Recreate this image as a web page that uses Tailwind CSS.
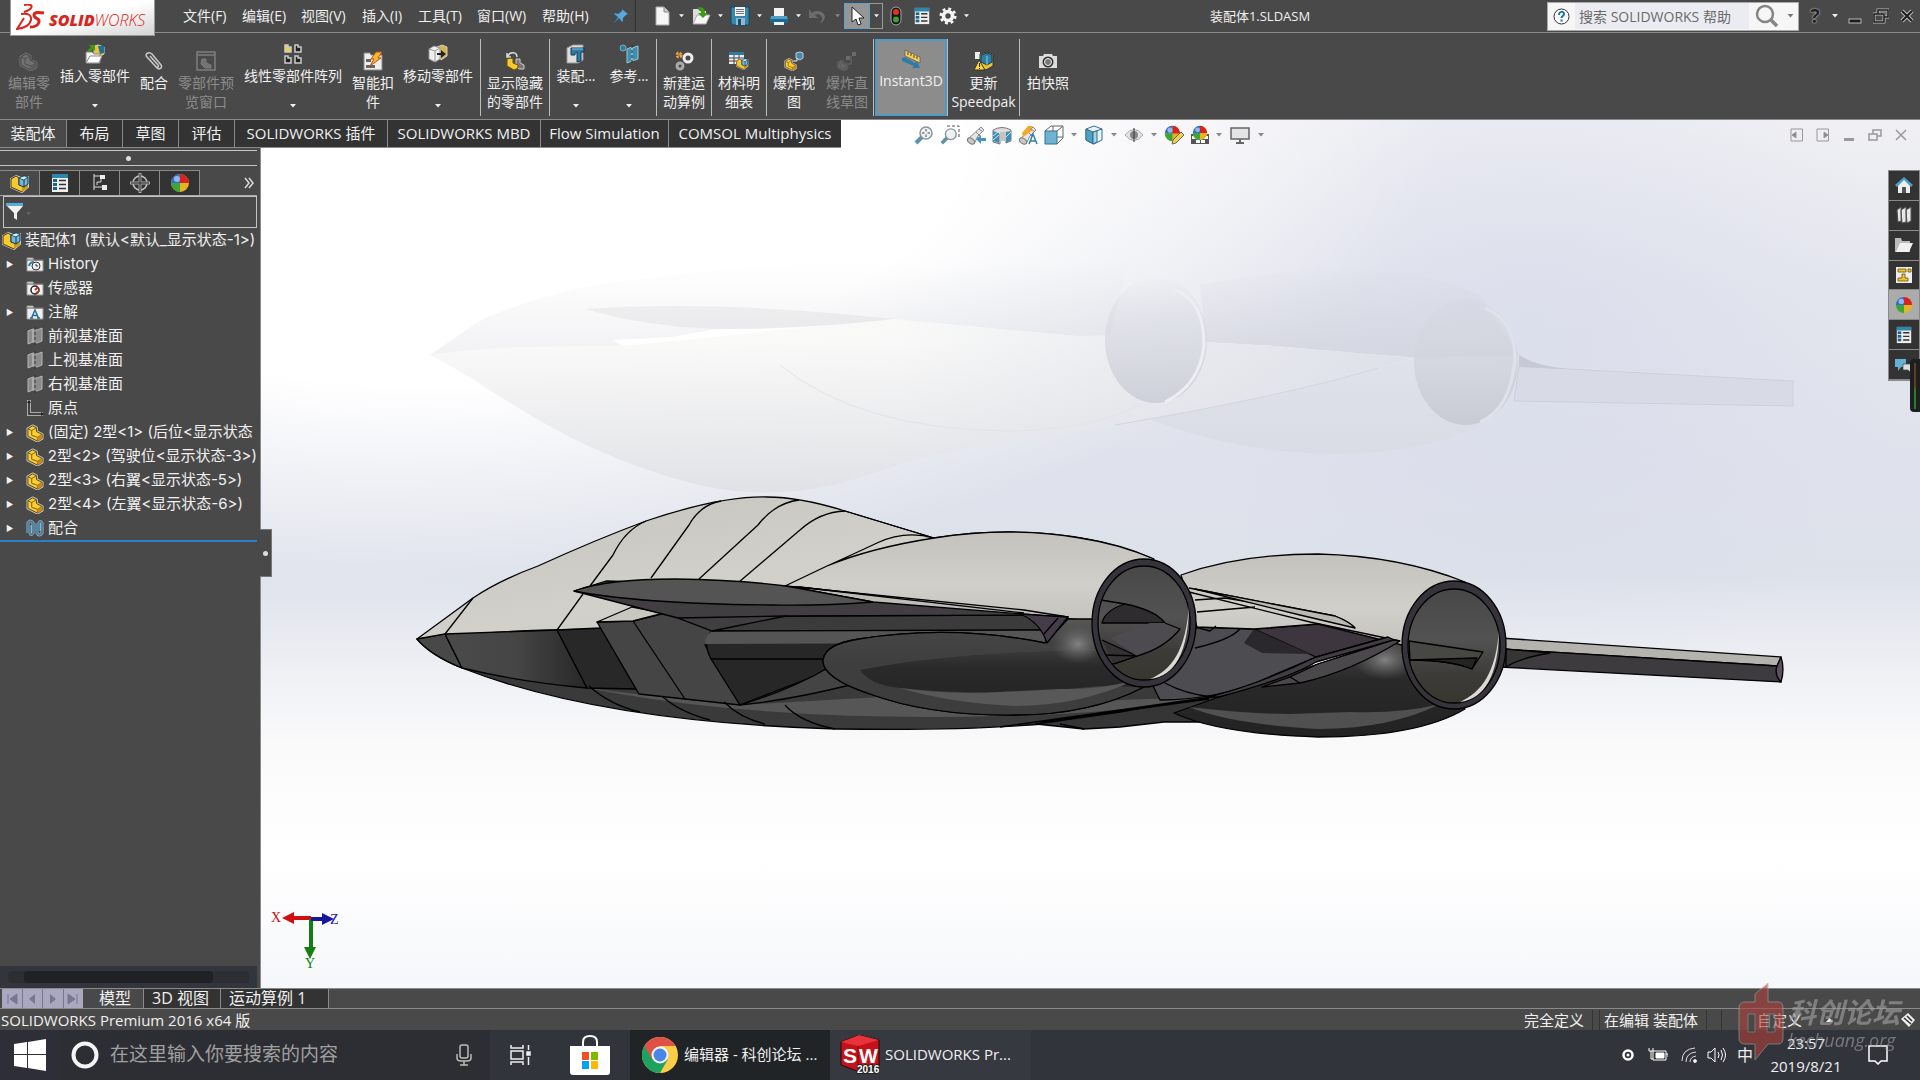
<!DOCTYPE html>
<html lang="zh-CN">
<head>
    <meta charset="UTF-8">
    <meta name="viewport" content="width=device-width, initial-scale=1.0">
    <title>装配体1.SLDASM</title>
    <script src="https://cdn.jsdelivr.net/npm/@tailwindcss/browser@4"></script>
</head>
<body class="flex h-screen flex-col overflow-hidden bg-[#494949] font-['Open_Sans','Noto_Sans_CJK_SC',sans-serif] text-sm text-[#f0f0f0]">

    <!-- shared icons -->
    <svg class="hidden">
        <symbol id="caret" viewBox="0 0 6 4"><path d="M0 0h6L3 3.5z" fill="currentColor"/></symbol>
        <symbol id="part" viewBox="0 0 20 20">
            <path d="M2 6l5-3 4 2v4l6 3v4l-5 3-10-5z" fill="#bbb" stroke="#c4c4c4" stroke-width="3" stroke-linejoin="round"/>
            <path d="M2 6l5-3 4 2v4l6 3v4l-5 3-10-5z" fill="#f9cf32" stroke="#5a430c"/>
            <path d="M2 6l4 2 5-3M6 8v5l6 2 5-3M12 15v4" fill="none" stroke="#7a5a10"/>
            <path d="M12 15l5-3v4l-5 3z" fill="#c88d12"/>
        </symbol>
        <symbol id="asm" viewBox="0 0 20 20">
            <path d="M1 6l5-3 5 2 7-1v10l-6 5-11-5z" fill="#bbb" stroke="#ccc" stroke-width="2" stroke-linejoin="round"/>
            <path d="M1 6l5-3 3 2v7l9 1-6 6-11-5z" fill="#f6c92e" stroke="#4e3a08"/>
            <path d="M12 14l6-3v4l-6 4z" fill="#d39a18"/>
            <path d="M9 5l5-2 4 1v7l-4 3-5-2z" fill="#76b7d8" stroke="#0d3a56"/>
            <path d="M9 5l5 2 4-3M14 7v7" fill="none" stroke="#0d3a56"/>
            <path d="M9.5 5l4.500-1.500L17 4l-3 2.500z" fill="#d8eef8"/>
        </symbol>
        <symbol id="folder" viewBox="0 0 18 18">
            <path d="M1 16V3h6l1 2h9v11z" fill="#efefef" stroke="#9a9a9a"/>
            <path d="M1 5h16" stroke="#555"/>
        </symbol>
        <symbol id="plane" viewBox="0 0 18 20">
            <path d="M2 5l5-2v13l-5 2zM7 3l4 1 5-2v13l-5 2-4-1z" fill="#8b8b8b" stroke="#b5b5b5"/>
            <path d="M9 1v18" stroke="#333" stroke-dasharray="3 2"/>
        </symbol>
        <symbol id="list" viewBox="0 0 20 20">
            <rect x="2" y="1" width="16" height="18" fill="#eee"/>
            <rect x="2" y="1" width="16" height="4" fill="#2e86ab"/>
            <g fill="#1c6387"><rect x="3" y="6" width="4" height="3"/><rect x="3" y="10" width="4" height="3"/><rect x="3" y="14" width="4" height="3"/></g>
            <path d="M9 7.500h7M9 11.500h7M9 15.500h7" stroke="#333" stroke-width="1.500"/>
        </symbol>
        <symbol id="ball" viewBox="0 0 20 20">
            <circle cx="10" cy="10" r="9" fill="#e6b422"/>
            <path d="M10 10V1a9 9 0 0 1 9 9z" fill="#d8231f"/>
            <path d="M10 10H1a9 9 0 0 1 9-9z" fill="#2c6fd6"/>
            <path d="M10 10v9a9 9 0 0 1-9-9z" fill="#3da63a"/>
            <circle cx="7" cy="6" r="3" fill="#fff" opacity=".5"/>
        </symbol>
        <symbol id="lens" viewBox="0 0 20 20">
            <path d="M8 12l-6 6" stroke="#5b93ae" stroke-width="4"/>
            <circle cx="12" cy="8" r="6" fill="#eef3f6" stroke="#8c9296" stroke-width="1.500"/>
        </symbol>
        <symbol id="scope" viewBox="0 0 20 20">
            <path d="M2 14L15 2l3 3-6 6-4 8z" fill="#e6e6e6" stroke="#888"/>
            <ellipse cx="5" cy="16" rx="4" ry="2.500" transform="rotate(35 5 16)" fill="#c9c9c9" stroke="#777"/>
            <path d="M10 7l4 4M13 4l4 3" stroke="#888"/>
        </symbol>
    </svg>

    <!-- title bar -->
    <header class="relative flex h-[33px] shrink-0 items-center border-b border-[#8a8a8a]">
        <div class="absolute top-0 left-[10px] z-10 flex h-9 w-[145px] items-center border border-t-0 border-[#999] bg-linear-to-br from-white from-50% to-[#d4d4d4] pl-[5px] text-[#d9261c]">
            <svg class="h-7 w-[29px]" viewBox="0 0 29 28" fill="none" stroke="#d9261c" stroke-width="2">
                <path d="M8 1c6-1 9 0 7 3-1 2-4 3-7 4"/>
                <path d="M5 10c7-1 11 1 10 6-1 5-7 8-14 9l7-11"/>
                <path d="M28 9c-5-1-10-1-10 2 0 4 6 3 5 7-1 4-5 5-9 5" stroke-width="3"/>
            </svg>
            <span class="pt-1 pl-1 text-[16px] leading-none italic"><b class="font-extrabold">SOLID</b><span class="font-light">WORKS</span></span>
        </div>
        <nav class="flex shrink-0 pl-[183px] text-[14px] whitespace-nowrap">
            <a href="#" class="w-[59px]">文件(F)</a>
            <a href="#" class="w-[59px]">编辑(E)</a>
            <a href="#" class="w-[61px]">视图(V)</a>
            <a href="#" class="w-[56px]">插入(I)</a>
            <a href="#" class="w-[59px]">工具(T)</a>
            <a href="#" class="w-[65px]">窗口(W)</a>
            <a href="#" class="w-[65px]">帮助(H)</a>
        </nav>
        <button class="flex h-8 w-[29px] items-center justify-center border-r border-[#333]" aria-label="固定菜单">
            <svg class="size-4" viewBox="0 0 16 16"><path d="M9 1l6 5-2 1-3 3v3l-1 1-3-4-5 5 4-6-4-3 1-1 3 1 4-3z" fill="#5da9d6" stroke="#2b6d96" stroke-width=".5"/></svg>
        </button>
        <div class="ml-[13px] flex h-8 shrink-0 items-center">
            <button class="flex w-[26px] justify-center" aria-label="新建"><svg class="size-5" viewBox="0 0 20 20"><path d="M4 1h8l5 5v13H4z" fill="#f6f6f6" stroke="#aaa"/><path d="M12 1v5h5" fill="#ccc" stroke="#888"/></svg></button>
            <svg class="mx-1 h-1 w-[5px]"><use href="#caret"/></svg>
            <button class="flex w-[26px] justify-center" aria-label="打开"><svg class="size-5" viewBox="0 0 20 20"><path d="M2 18V3h5l2 2h6v13z" fill="#ddd"/><path d="M2 18L6 9h13l-4 9z" fill="#f6f6f6" stroke="#aaa"/><path d="M6 2c5-2 8 0 8 5h3l-5 5-5-5h3c0-2-1-4-4-5z" fill="#3f9b12"/></svg></button>
            <svg class="mx-1 h-1 w-[5px]"><use href="#caret"/></svg>
            <button class="flex w-[26px] justify-center" aria-label="保存"><svg class="size-5" viewBox="0 0 20 20"><path d="M1 1h18v18H3l-2-2z" fill="#3a87ad" stroke="#134a68"/><path d="M5 1h10v9H5z" fill="#f3f3f3"/><path d="M6 3.500h8M6 5.500h8M6 7.500h8" stroke="#777"/><path d="M6 12h9v7H6z" fill="#8cb9d0"/><path d="M8 13h3v6H8z" fill="#174f6e"/></svg></button>
            <svg class="mx-1 h-1 w-[5px]"><use href="#caret"/></svg>
            <button class="flex w-[26px] justify-center" aria-label="打印"><svg class="size-5" viewBox="0 0 20 20"><path d="M5 2h10v9H5z" fill="#f3f3f3"/><path d="M2 10h16l1 4H1z" fill="#4f9ec4"/><path d="M1 13h18v4H1z" fill="#1d6890"/><path d="M5 16h10v3H5z" fill="#e6f2f8"/></svg></button>
            <svg class="mx-1 h-1 w-[5px]"><use href="#caret"/></svg>
            <button class="flex w-[26px] justify-center" aria-label="撤消" disabled><svg class="size-5" viewBox="0 0 20 20"><path d="M1 3v9h9L7 9c4-2 8 1 7 5-1 2-2 3-3 4 8-3 8-12-1-13-2 0-4 0-6 2z" fill="#6c6c6c"/></svg></button>
            <svg class="mx-1 h-1 w-[5px] text-[#888]"><use href="#caret"/></svg>
            <button class="flex h-[26px] w-[26px] items-center justify-center border border-[#5ba3cf] bg-[#969696]" aria-label="选择"><svg class="size-5" viewBox="0 0 20 20"><path d="M5 1v15l4-3 2 6 3-1-2-6h5z" fill="#fff" stroke="#222"/></svg></button>
            <span class="flex h-[26px] w-[13px] items-center justify-center border border-l-0 border-[#999]"><svg class="h-1 w-[5px]"><use href="#caret"/></svg></span>
            <button class="flex w-[26px] justify-center" aria-label="重建模型"><svg class="size-5" viewBox="0 0 20 20"><rect x="5" y="1" width="10" height="18" rx="5" fill="#161616" stroke="#aaa"/><circle cx="10" cy="6" r="3" fill="#e0331f"/><circle cx="10" cy="13.500" r="3" fill="#3f9e35"/></svg></button>
            <button class="flex w-[26px] justify-center" aria-label="文件属性"><svg class="size-[18px]"><use href="#list"/></svg></button>
            <button class="flex w-[25px] justify-center" aria-label="选项"><svg class="size-[18px]" viewBox="0 0 20 20"><circle cx="10" cy="10" r="5" fill="none" stroke="#f4f4f4" stroke-width="4"/><circle cx="10" cy="10" r="8" fill="none" stroke="#f4f4f4" stroke-width="3" stroke-dasharray="3.200 3.080"/></svg></button>
            <svg class="mx-1 h-1 w-[5px]"><use href="#caret"/></svg>
        </div>
        <h1 class="min-w-0 flex-1 text-center text-[13px]">装配体1.SLDASM</h1>
        <form class="flex h-[29px] w-[252px] shrink-0 items-center border border-[#aaa] bg-[#f6f6f6]">
            <svg class="mx-[5px] size-[17px]" viewBox="0 0 17 17"><circle cx="8.500" cy="8.500" r="7.500" fill="#fff" stroke="#333"/><path d="M6 7c0-4 5-4 5-1 0 2-2.500 2-2.500 4M8.500 11.500v2" fill="none" stroke="#1b75a5" stroke-width="2"/></svg>
            <input type="text" aria-label="搜索帮助" placeholder="搜索 SOLIDWORKS 帮助" class="h-[26px] w-[174px] bg-[#ebecf1] pl-1 text-[14px] placeholder:text-[#6a6a6a]">
            <button type="button" aria-label="搜索" class="ml-[6px]"><svg class="size-6" viewBox="0 0 24 24" fill="none" stroke="#858585"><circle cx="10" cy="10" r="8" stroke-width="2.500"/><path d="M16 16l6 6" stroke-width="3.500"/></svg></button>
            <svg class="ml-2 h-1 w-[7px] text-[#777]"><use href="#caret"/></svg>
        </form>
        <div class="ml-[3px] flex shrink-0 items-center">
            <button class="w-[26px] text-[20px] leading-none font-bold text-[#222] [text-shadow:0_0_1px_#ccc,0_0_2px_#ccc]" aria-label="帮助">?</button>
            <svg class="mx-1 h-1 w-[6px]"><use href="#caret"/></svg>
            <button class="flex w-[26px] justify-center" aria-label="最小化"><svg class="size-4" viewBox="0 0 16 16"><rect x="2" y="11" width="12" height="4" fill="#1c1c1c" stroke="#bbb"/></svg></button>
            <button class="flex w-[26px] justify-center" aria-label="还原"><svg class="size-4" viewBox="0 0 16 16" fill="none"><path d="M5 6V2h10v7h-4M1 6h10v8H1z" stroke="#bbb" stroke-width="3"/><path d="M5 6V2h10v7h-4M1 6h10v8H1z" stroke="#1c1c1c" stroke-width="1.500"/></svg></button>
            <button class="flex w-[26px] justify-center" aria-label="关闭"><svg class="size-4" viewBox="0 0 16 16" fill="none"><path d="M3 3l10 10M13 3L3 13" stroke="#bbb" stroke-width="4"/><path d="M3 3l10 10M13 3L3 13" stroke="#1c1c1c" stroke-width="2"/></svg></button>
        </div>
    </header>

    <!-- ribbon -->
    <div class="flex h-[87px] shrink-0 border-b border-[#8a8a8a] pt-[6px] pb-[3px] text-center text-[14px] leading-[19px] whitespace-nowrap">
        <button class="flex w-[58px] flex-col items-center pt-3 text-[#8c8c8c]" disabled>
            <svg class="mb-[2px] size-5 opacity-30 grayscale"><use href="#part"/></svg>编辑零<br>部件
        </button>
        <button class="flex w-[74px] flex-col items-center pt-[5px]">
            <svg class="mb-[2px] size-5" viewBox="0 0 20 20"><path d="M9 2l4-1 6 2v7l-5 3-5-3z" fill="#efc22f" stroke="#ccc"/><path d="M13 2h6v7l-4 1z" fill="#1f6f99"/><path d="M1 19V8h6l2 2h6v9z" fill="#f2f2f2" stroke="#888"/><path d="M1 19l4-7h12l-3 7z" fill="#fff" stroke="#888"/><path d="M2 7l4-4-2-2h6v6L8 5 5 8z" fill="#3f9b12"/></svg>插入零部件
            <svg class="mt-auto mb-2 h-1 w-[6px]"><use href="#caret"/></svg>
        </button>
        <button class="flex w-[44px] flex-col items-center pt-3">
            <svg class="mb-[2px] size-5" viewBox="0 0 20 20" fill="none" stroke="#c9c9c9" stroke-width="1.500"><path d="M5 8l8 9c2 2 6 0 4-3L8 3C5 0 0 3 3 6l9 10c2 1 3-1 2-2L6 5"/></svg>配合
        </button>
        <button class="flex w-[60px] flex-col items-center pt-3 text-[#8c8c8c]" disabled>
            <svg class="mb-[2px] size-5" viewBox="0 0 20 20" fill="none" stroke="#7d7d7d"><path d="M1 1h18v18H1zM1 4h18" stroke-width="1.500"/><path d="M6 8h4v4l5 2v3H9l-4-4z" fill="#737373"/></svg>零部件预<br>览窗口
        </button>
        <button class="flex w-[114px] flex-col items-center pt-[5px]">
            <svg class="mb-[2px] size-5" viewBox="0 0 20 20" stroke="#ccc" stroke-width="1.500"><path d="M2 1h3v2h3v5H2z" fill="#f0cd4e"/><path d="M12 1h3v2h3v5h-6zM2 12h3v2h3v5H2zM12 12h3v2h3v5h-6z" fill="#222"/></svg>线性零部件阵列
            <svg class="mt-auto mb-2 h-1 w-[6px]"><use href="#caret"/></svg>
        </button>
        <button class="flex w-[46px] flex-col items-center pt-3">
            <svg class="mb-[2px] size-5" viewBox="0 0 20 20"><path d="M1 2h6l1 2h11v15H1z" fill="#eee" stroke="#888"/><path d="M3 8h5v3H3zM3 14h9v3H3z" fill="#666"/><path d="M13 1h6l-4 6h3L7 15l4-7H8z" fill="#f5b92f" stroke="#c44d12"/></svg>智能扣<br>件
        </button>
        <button class="flex w-[84px] flex-col items-center pt-[5px]">
            <svg class="mb-[2px] size-5" viewBox="0 0 20 20"><path d="M9 3l5-2 5 2v9l-6 4z" fill="#d9b64a" stroke="#ccc"/><path d="M1 5l5-3 6 2v11l-5 3-6-3z" fill="#eee" stroke="#999"/><path d="M1 5l6 2 5-3M7 7v11" fill="none" stroke="#999"/><path d="M9 9h4V6l5 4-5 4v-3H9z" fill="#222"/></svg>移动零部件
            <svg class="mt-auto mb-2 h-1 w-[6px]"><use href="#caret"/></svg>
        </button>
        <button class="flex w-[70px] flex-col items-center border-x border-[#bbb] pt-3">
            <svg class="mb-[2px] size-5" viewBox="0 0 20 20"><path d="M3 5c2-5 9-4 9 1M2 2v4h4" fill="none" stroke="#ddd" stroke-width="1.500"/><path d="M11 8h4v4l4 2v4h-5l-3-3z" fill="#777" stroke="#ccc"/><path d="M2 8l4-1 2 1v4l5 2v3l-4 2-7-4z" fill="#f6c92e" stroke="#6b500e"/></svg>显示隐藏<br>的零部件
        </button>
        <button class="flex w-[52px] flex-col items-center pt-[5px]">
            <svg class="mb-[2px] size-5" viewBox="0 0 20 20"><path d="M1 4l6-3h10v15l-5 3H1z" fill="#ddd" stroke="#999"/><path d="M5 4h13v4h-3v9l-4 1V8l-2 1v2H5z" fill="#2b7ba5" stroke="#0f3f5a"/><path d="M6 5h11" stroke="#8cc4de"/></svg>装配...
            <svg class="mt-auto mb-2 h-1 w-[6px]"><use href="#caret"/></svg>
        </button>
        <button class="flex w-[54px] flex-col items-center pt-[5px]">
            <svg class="mb-[2px] size-5" viewBox="0 0 20 20"><circle cx="4" cy="4" r="3" fill="#2b7ba5" stroke="#8ab"/><path d="M8 5l5-2v14l-5 2zM13 4l6-2v13l-6 2z" fill="#3d8db5" stroke="#9cc"/><path d="M13 1v18" stroke="#222" stroke-dasharray="3 2"/></svg>参考...
            <svg class="mt-auto mb-2 h-1 w-[6px]"><use href="#caret"/></svg>
        </button>
        <button class="flex w-[55px] flex-col items-center border-l border-[#bbb] pt-3">
            <svg class="mb-[2px] size-5" viewBox="0 0 20 20" fill="none"><circle cx="5" cy="4" r="2" stroke="#f0a040" stroke-width="3" stroke-dasharray="2 1"/><circle cx="14" cy="7" r="4" stroke="#eee" stroke-width="3"/><circle cx="6" cy="15" r="3" stroke="#aaa" stroke-width="3"/></svg>新建运<br>动算例
        </button>
        <button class="flex w-[55px] flex-col items-center border-l border-[#bbb] pt-3">
            <svg class="mb-[2px] size-5" viewBox="0 0 20 20"><path d="M0 1h15v12H0z" fill="#eee"/><path d="M0 1h15v3H0z" fill="#2b7ba5"/><path d="M0 7h15M0 10h15M5 4v9M10 4v9" stroke="#444"/><svg x="7" y="6" width="13" height="13"><use href="#asm"/></svg></svg>材料明<br>细表
        </button>
        <button class="flex w-[55px] flex-col items-center border-l border-[#bbb] pt-3">
            <svg class="mb-[2px] size-5" viewBox="0 0 20 20"><svg x="0" y="6" width="14" height="14"><use href="#part"/></svg><path d="M12 2l4-1 3 1v5l-3 2-4-2z" fill="#3d8db5" stroke="#ccc"/><path d="M9 10h4V7" stroke="#eee" fill="none"/></svg>爆炸视<br>图
        </button>
        <button class="flex w-[52px] flex-col items-center pt-3 text-[#8c8c8c]" disabled>
            <svg class="mb-[2px] size-5 opacity-25 grayscale" viewBox="0 0 20 20"><svg x="0" y="8" width="12" height="12"><use href="#part"/></svg><path d="M9 5h4v4H9zM15 1h4v4h-4z" fill="#ccc"/><path d="M8 13h6V5" stroke="#ccc" fill="none"/></svg>爆炸直<br>线草图
        </button>
        <div class="border-l border-[#bbb] pl-px">
            <button class="flex h-full w-[72px] flex-col items-center border-2 border-[#4b9ac9] bg-[#8c8c8c] pt-2">
                <svg class="mb-[2px] size-5" viewBox="0 0 20 20"><path d="M4 1l15 7v6L4 7z" fill="#f4ce57" stroke="#555" stroke-width=".7"/><path d="M7 3v3M10 4v3M13 6v3M16 7v3" stroke="#444"/><path d="M1 9l3-1 10 6 2-2 3 7h-8l2-2L1 12z" fill="#2c7ca8"/></svg>Instant3D
            </button>
        </div>
        <button class="flex w-[73px] flex-col items-center border-x border-[#bbb] pt-3">
            <svg class="mb-[2px] size-5" viewBox="0 0 20 20"><path d="M1 1h5v7H1z" fill="#eee"/><path d="M6 3l7-2 6 2v12l-7 4-6-3z" fill="#efc22f" stroke="#333"/><path d="M7 4l6-2 5 2v7l-5 3-6-3z" fill="#2f7ea8" stroke="#0d3a56"/><path d="M13 5v9" stroke="#9cd"/><path d="M5 9l6 10H0z" fill="#ffd92e" stroke="#333"/><path d="M5.500 12v4M5.500 17v1" stroke="#222"/></svg>更新<br>Speedpak
        </button>
        <button class="flex w-[56px] flex-col items-center pt-3">
            <svg class="mb-[2px] size-5" viewBox="0 0 20 20"><path d="M1 5h4l1-2h8l1 2h4v12H1z" fill="#dcdcdc"/><circle cx="10" cy="11" r="5.500" fill="#333"/><circle cx="10" cy="11" r="3.500" fill="#777" stroke="#eee"/></svg>拍快照
        </button>
    </div>

    <main class="relative flex min-h-0 flex-1 flex-col">
        <!-- 3D scene -->
        <svg class="absolute inset-0 size-full" viewBox="0 120 1920 868" preserveAspectRatio="xMidYMid slice">
            <defs>
                <linearGradient id="sky" x1="0" y1="0" x2="0" y2="1">
                    <stop offset="0" stop-color="#f0f0f4"/><stop offset=".2" stop-color="#e4e6ee"/>
                    <stop offset=".4" stop-color="#dfe2ec"/><stop offset=".52" stop-color="#dde1ea"/>
                    <stop offset=".62" stop-color="#eceef3"/><stop offset=".72" stop-color="#fafafb"/>
                    <stop offset=".85" stop-color="#fff"/><stop offset="1" stop-color="#f6f7fa"/>
                </linearGradient>
                <radialGradient id="glow" gradientUnits="userSpaceOnUse" cx="0" cy="0" r="1" gradientTransform="translate(500 190) rotate(-5) scale(950 400)">
                    <stop offset="0" stop-color="#fff"/><stop offset=".48" stop-color="#fff"/><stop offset=".72" stop-color="#fff" stop-opacity=".5"/><stop offset="1" stop-color="#fff" stop-opacity="0"/>
                </radialGradient>
                <radialGradient id="haze" gradientUnits="userSpaceOnUse" cx="0" cy="0" r="1" gradientTransform="translate(1530 330) scale(380 360)">
                    <stop offset="0" stop-color="#d6daea" stop-opacity=".6"/><stop offset="1" stop-color="#d6daea" stop-opacity="0"/>
                </radialGradient>
                <radialGradient id="shine"><stop offset="0" stop-color="#8a8a8a" stop-opacity=".9"/><stop offset="1" stop-color="#666" stop-opacity="0"/></radialGradient>
                <linearGradient id="skin" x1="0" y1="0" x2="1" y2="1"><stop offset="0" stop-color="#c3c2bd"/><stop offset=".5" stop-color="#d1d0cb"/><stop offset="1" stop-color="#c6c5c0"/></linearGradient>
                <linearGradient id="pod" x1="0" y1="0" x2="0" y2="1"><stop offset="0" stop-color="#c3c2bd"/><stop offset=".6" stop-color="#d0cfca"/><stop offset="1" stop-color="#c4c3be"/></linearGradient>
                <linearGradient id="belly" x1="0" y1="0" x2="0" y2="1"><stop offset="0" stop-color="#585858"/><stop offset=".5" stop-color="#2a2a2a"/><stop offset="1" stop-color="#222"/></linearGradient>
                <linearGradient id="side" x1="0" y1="0" x2="1" y2="0"><stop offset="0" stop-color="#4a4a4a"/><stop offset=".5" stop-color="#454545"/><stop offset="1" stop-color="#282828"/></linearGradient>
                <linearGradient id="bore" x1="0" y1="0" x2="0" y2="1"><stop offset="0" stop-color="#484848"/><stop offset=".45" stop-color="#525252"/><stop offset=".75" stop-color="#3c3b38"/><stop offset="1" stop-color="#37362f"/></linearGradient>
                <linearGradient id="fade" gradientUnits="userSpaceOnUse" x1="0" y1="260" x2="0" y2="355"><stop offset="0" stop-color="#c8c9d0" stop-opacity="0"/><stop offset="1" stop-color="#c0c2ca" stop-opacity=".55"/></linearGradient>
                <linearGradient id="veil" gradientUnits="userSpaceOnUse" x1="0" y1="340" x2="0" y2="495"><stop offset="0" stop-color="#f9f9f8" stop-opacity=".9"/><stop offset="1" stop-color="#e0e1e5" stop-opacity=".95"/></linearGradient>
                <linearGradient id="veilx" gradientUnits="userSpaceOnUse" x1="900" y1="0" x2="1400" y2="0"><stop offset="0" stop-color="#dcdfe8" stop-opacity="0"/><stop offset="1" stop-color="#dcdfe8" stop-opacity=".9"/></linearGradient>
                <linearGradient id="veil2" gradientUnits="userSpaceOnUse" x1="0" y1="340" x2="0" y2="455"><stop offset="0" stop-color="#e0e3eb"/><stop offset="1" stop-color="#dadce5"/></linearGradient>
                <linearGradient id="disc" gradientUnits="userSpaceOnUse" x1="0" y1="275" x2="0" y2="425"><stop offset="0" stop-color="#d0d2dc" stop-opacity="0"/><stop offset=".4" stop-color="#d4d6df" stop-opacity=".6"/><stop offset="1" stop-color="#c9cbd4"/></linearGradient>
            </defs>
            <rect y="120" width="1920" height="868" fill="url(#sky)"/>
            <rect y="120" width="1920" height="868" fill="url(#haze)"/>
            <rect y="120" width="1920" height="868" fill="url(#glow)"/>

            <!-- floor reflection -->
            <path d="M1152 420Q1240 454 1337 454Q1420 454 1478 427L1500 350H1200z" fill="url(#veil2)"/>
            <path d="M1200 285Q1380 250 1480 295L1519 355L1414 358Q1380 352 1337 361L1275 346L1206 342z" fill="url(#fade)" opacity=".6"/>
            <path d="M1519 366L1568 369L1793 381V406L1514 401z" fill="#d8dbe6" stroke="#cdd0db"/>
            <path d="M1519 355Q1535 366 1568 369L1519 367z" fill="#c6c9d3"/>
            <path d="M430 355C500 390 560 450 699 485Q762 500 835 485C890 470 900 460 962 450L1115 425Q1290 395 1378 368L1414 358L1275 346L1079 336L894 319L622 346Q490 345 430 355z" fill="url(#veil)"/>
            <path d="M780 480L962 450L1115 425Q1290 395 1378 368L1414 358L1275 346L1079 336L894 319z" fill="url(#veilx)"/>
            <path d="M430 355L481 320Q560 285 654 278Q800 255 1130 258L1110 335L1079 336L894 319Q800 329 717 329L672 337L613 340L622 346Q490 345 430 355z" fill="url(#fade)" opacity=".4"/>
            <path d="M586 309Q717 300 894 319Q800 330 717 329Q640 326 586 309z" fill="#dcdddf" opacity=".4"/>
            <path d="M780 365Q860 430 1010 431Q1090 430 1140 405" fill="none" stroke="#e3e4e9"/>
            <path d="M1115 425Q1290 395 1378 368" fill="none" stroke="#d4d6de"/>
            <ellipse cx="1156" cy="340" rx="51" ry="63" fill="url(#disc)"/>
            <path d="M1175 290Q1204 300 1204 345Q1200 385 1165 402" fill="none" stroke="#edeef3" stroke-width="3"/>
            <ellipse cx="1466" cy="362" rx="52" ry="63" fill="url(#disc)"/>
            <path d="M1485 308Q1515 320 1515 360Q1510 410 1480 422" fill="none" stroke="#e0e2eb" stroke-width="3"/>

            <g stroke="#000" stroke-width="1.300" stroke-linejoin="round">
                <!-- tail boom -->
                <path d="M1500 638L1781 657L1777 666L1500 649z" fill="#b4b3ae"/>
                <path d="M1500 649L1777 666L1781 682L1500 667z" fill="#3e3b3f"/>
                <path d="M1506 649L1550 653Q1520 658 1506 667z" fill="#353535"/>
                <path d="M1781 657Q1785 669 1781 682Q1774 675 1777 666z" fill="#5c4e63"/>
                <!-- fuselage, lower half -->
                <path d="M417 639Q432 656 462 668Q600 722 836 729Q960 731 1043 724Q1120 716 1212 697L1388 637L1197 600L700 600L445 634z" fill="#3a3a3a"/>
                <path d="M1036 724L1084 729L1120 727L1164 722L1209 722L1240 690L1120 712z" fill="#353535"/>
                <path d="M587 688L636 694L740 705L880 697L951 712L1120 700L1209 697Q1120 714 1000 716Q760 722 587 688z" fill="#565656" stroke="none"/>
                <!-- aft pod -->
                <path d="M1174 713L1219 697L1300 670L1390 640L1420 620L1465 709Q1418 737 1318 737Q1219 734 1174 713z" fill="url(#belly)"/>
                <path d="M1189 707Q1250 714 1290 714L1350 712Q1400 714 1440 704Q1390 729 1318 729Q1230 724 1189 707z" fill="#505050" stroke="none"/>
                <ellipse cx="1385" cy="660" rx="32" ry="20" fill="url(#shine)" stroke="none"/>
                <path d="M1150 680L1197 627L1254 629L1318 624L1388 637L1316 657L1269 677Q1220 700 1160 700z" fill="#4d4c50"/>
                <path d="M1254 629L1318 624L1386 637L1316 657z" fill="#3d363f"/>
                <path d="M1254 629L1244 643L1262 653L1310 654z" fill="#2a282b" stroke="none"/>
                <path d="M1181 575Q1239 554 1318 554Q1400 556 1465 582L1402 645L1318 624L1254 629L1197 627z" fill="url(#pod)"/>
                <path d="M1195 600L1225 598L1280 607M1197 612L1255 607M1189 588L1335 616Q1350 622 1355 628M1189 592L1310 622L1400 641" fill="none"/>
                <path d="M1195 589L1335 616Q1350 622 1355 628L1300 615z" fill="#bab9b4"/>
                <path d="M1388 637L1316 657Q1260 684 1209 697L1219 697Q1290 678 1316 662L1394 640z" fill="#423d43"/>
                <path d="M1394 640L1318 664L1290 677L1262 687L1300 683Q1350 672 1400 641z" fill="#4a484b"/>
                <path d="M1290 677L1300 683M1195 627l15 4 6-5M1195 648Q1230 640 1240 629M1165 683Q1185 694 1212 697L1000 727M1209 699L1040 722" fill="none"/>
                <!-- upper hull -->
                <path d="M417 639L473 598Q500 580 538 566Q595 540 646 521Q720 496 767 497Q800 497 845 511L934 538Q969 532 1011 532Q1090 532 1154 559L1093 620L1066 618L799 587L601 629L557 630Q490 631 417 639z" fill="url(#skin)"/>
                <path d="M785 586Q810 572 827 566Q880 545 934 538Q1010 526 1080 538Q1120 544 1154 559L1110 570L1093 620L1066 618L799 587z" fill="url(#pod)" stroke="none"/>
                <path d="M473 598L445 634L462 668M646 521Q625 530 613 555L590 586M583 594L557 630L587 688M721 501Q700 505 689 525L651 578M799 500Q775 503 758 525L699 579M845 511Q820 512 800 530L739 582M934 538Q905 530 877 543Q845 558 827 566L785 586M827 566Q870 548 934 538M845 511L934 538Q1010 526 1080 538Q1120 544 1154 559" fill="none"/>
                <!-- nose flank -->
                <path d="M417 639L445 634L462 668Q430 655 417 639z" fill="#484848"/>
                <path d="M445 634L557 630L587 688Q520 682 462 668z" fill="url(#side)"/>
                <path d="M557 630L601 628L636 689L587 688z" fill="#282828"/>
                <!-- air intake -->
                <path d="M597 622L633 621L678 610L720 612L705 645L740 705L685 699L639 694z" fill="#454545"/>
                <path d="M633 621L685 699" fill="none"/>
                <path d="M597 622L632 607L664 613L633 621z" fill="#c8c7c2"/>
                <path d="M678 618L712 631Q730 616 786 616L1034 615L1045 645L830 670L740 705L711 659Q702 642 712 631z" fill="#272727"/>
                <path d="M712 631Q730 616 786 616L1034 615L1043 630z" fill="#3b3b3b"/>
                <path d="M712 631L1043 630L1045 643L705 644Q705 636 712 631z" fill="#555" stroke="none"/>
                <path d="M711 659L825 659M712 631L1043 630" fill="none"/>
                <path d="M740 705Q790 690 826 669L850 685Q790 700 740 705z" fill="#444"/>
                <!-- near pod underside -->
                <path d="M823 660Q825 644 859 639Q951 624 1045 643L1068 619L1098 619Q1084 650 1120 679L1144 687Q1090 715 1015 715Q930 716 870 694Q822 678 823 660z" fill="url(#belly)"/>
                <path d="M823 660Q825 644 859 639Q951 624 1045 643L1098 650Q950 652 860 670Q870 685 900 688Q1000 698 1098 686L1144 687Q1090 715 1015 715Q930 716 870 694Q822 678 823 660z" fill="#444" stroke="none" opacity=".8"/>
                <path d="M900 688Q950 695 1000 692L1060 689Q1100 690 1135 680Q1080 706 1015 706Q950 703 900 688z" fill="#585858" stroke="none"/>
                <ellipse cx="1078" cy="644" rx="26" ry="20" fill="url(#shine)" stroke="none"/>
                <path d="M823 660Q825 644 859 639Q951 624 1045 643M823 660Q822 678 870 694Q930 716 1015 715Q1090 715 1144 687" fill="none"/>
                <!-- wing -->
                <path d="M574 591L606 581L799 587L1068 617L1034 615L786 616L712 631L678 618z" fill="#413e42"/>
                <path d="M786 586L873 602L1060 617L1068 617L1024 610z" fill="#bdbcb7"/>
                <path d="M574 591Q606 579 675 579Q740 580 786 586L873 602Q820 606 772 605Q640 604 574 591z" fill="#545454"/>
                <path d="M1020 614Q1040 622 1047 643L1068 617z" fill="#443c48"/>
                <path d="M1058 618L1043 635M678 618L786 616M799 587L1024 613" fill="none"/>
                <path d="M589 686Q610 705 640 712M663 697Q680 712 710 720M724 702Q740 718 765 724M785 705Q800 722 835 729M1060 724L1084 729" fill="none"/>
            </g>
            <!-- engine rings -->
            <g stroke="#000" stroke-width="1.300" stroke-linejoin="round">
                <ellipse cx="1144" cy="623" rx="52" ry="64" fill="#37333a"/>
                <ellipse cx="1144" cy="623" rx="46" ry="57" fill="url(#bore)"/>
                <path d="M1101 600L1125 604Q1155 610 1165 623H1102Q1105 610 1125 604" fill="#2e2c2f"/>
                <path d="M1102 640L1137 656L1114 664M1106 655L1137 656" fill="#333134"/>
                <path d="M1150 623H1165L1180 629Q1165 648 1137 656L1110 638z" fill="#4d4a50" stroke="none"/>
                <path d="M1165 623L1180 629Q1165 648 1137 656Q1115 664 1112 664" fill="none"/>
                <path d="M1189 605C1186 650 1172 670 1150 679Q1188 675 1189 605z" fill="#dad9d3" stroke="none"/>
                <ellipse cx="1454" cy="645" rx="52" ry="64" fill="#37333a"/>
                <ellipse cx="1454" cy="646" rx="46" ry="57" fill="url(#bore)"/>
                <path d="M1409 641L1483 652L1472 669Q1450 660 1410 660z" fill="#474743"/>
                <path d="M1410 660L1477 658L1472 669Q1450 660 1410 660z" fill="#242420"/>
                <path d="M1499 630C1496 672 1482 692 1460 702Q1498 697 1499 630z" fill="#dad9d3" stroke="none"/>
            </g>

            <!-- axis triad -->
            <g font-family="'Liberation Serif',serif" font-size="14">
                <path d="M288 918h23" stroke="#d01010" stroke-width="4"/><path d="M282 918l12-6v12z" fill="#d01010"/>
                <path d="M311 919v30" stroke="#118011" stroke-width="4"/><path d="M310 959l-6-12h12z" fill="#118011"/>
                <path d="M311 919h14" stroke="#1616a0" stroke-width="4"/><path d="M334 919l-12-6v12z" fill="#1616a0"/>
                <text x="271" y="922" fill="#d01010">X</text><text x="330" y="924" fill="#1616c0">Z</text><text x="305" y="968" fill="#118011">Y</text>
            </g>
        </svg>

        <!-- command tabs and view toolbar -->
        <div class="relative flex h-7 shrink-0">
            <nav class="flex border-b border-[#8a8a8a] bg-[#333] text-center text-[15px] leading-[26px] whitespace-nowrap">
                <a href="#" class="w-[67px] border-r border-[#8a8a8a] bg-[#494949]">装配体</a>
                <a href="#" class="w-14 border-r border-[#8a8a8a]">布局</a>
                <a href="#" class="w-14 border-r border-[#8a8a8a]">草图</a>
                <a href="#" class="w-14 border-r border-[#8a8a8a]">评估</a>
                <a href="#" class="w-[153px] border-r border-[#8a8a8a]">SOLIDWORKS 插件</a>
                <a href="#" class="w-[153px] border-r border-[#8a8a8a]">SOLIDWORKS MBD</a>
                <a href="#" class="w-[128px] border-r border-[#8a8a8a]">Flow Simulation</a>
                <a href="#" class="w-[172px]">COMSOL Multiphysics</a>
            </nav>
            <div class="ml-[70px] flex items-center pt-[2px] text-[#888]">
                <button class="flex w-[26px] justify-center" aria-label="整屏显示"><svg class="size-5" viewBox="0 0 20 20"><use href="#lens"/><path d="M12 4v8M8 8h8" stroke="#444" stroke-dasharray="2.500 3"/></svg></button>
                <button class="flex w-[26px] justify-center" aria-label="局部放大"><svg class="size-5" viewBox="0 0 20 20"><path d="M7 1h12v12" fill="none" stroke="#555" stroke-dasharray="3 2"/><svg y="2" width="18" height="18"><use href="#lens"/></svg></svg></button>
                <button class="flex w-[26px] justify-center" aria-label="上一视图"><svg class="size-5" viewBox="0 0 20 20"><use href="#scope"/><path d="M10 14l5-4v3h5v3h-5v3z" fill="#4a93b8"/></svg></button>
                <button class="flex w-[26px] justify-center" aria-label="剖面视图"><svg class="size-5" viewBox="0 0 20 20"><path d="M1 5q9-5 18 0v11l-5 2V9H8v10l-7-2z" fill="#ddd" stroke="#777"/><path d="M8 7h6v10q-3-2-6 0z" fill="#c4c4c4"/><path d="M1 6l6 2v10l-6-2zM14 7l5-1v9l-5 3z" fill="#3d8db5"/><path d="M1 11l5-4M1 15l6-5M14 12l5-5" stroke="#d0e8f4"/></svg></button>
                <button class="flex w-[26px] justify-center" aria-label="动态注解视图"><svg class="size-5" viewBox="0 0 20 20"><use href="#scope"/><path d="M4 8l6-7h5l-3 4h3L5 12z" fill="#f3a928"/><path d="M11 19l4-10 4 10M12.500 16h5" stroke="#3480a8" stroke-width="1.500" fill="none"/></svg></button>
                <button class="flex w-[26px] justify-center" aria-label="视图定向"><svg class="size-5" viewBox="0 0 20 20"><path d="M1 6l6-5h12v12l-6 6M13 6l6-5M9 1v11h10" fill="none" stroke="#666"/><path d="M1 6h12v13H1z" fill="#6fb3d4" stroke="#33708f"/></svg></button>
                <svg class="mx-1 h-1 w-[6px]"><use href="#caret"/></svg>
                <button class="flex w-[26px] justify-center" aria-label="显示样式"><svg class="size-5" viewBox="0 0 20 20" stroke="#33708f"><path d="M2 4l8-3 8 3v11l-8 4-8-4z" fill="#e9f4f9"/><path d="M2 4l7 3v12l-7-4z" fill="#4f9ec4"/><path d="M9 7l9-3M9 7v12" fill="none"/><path d="M9 7l4-1v11l-4 2z" fill="#a9d3e6"/></svg></button>
                <svg class="mx-1 h-1 w-[6px]"><use href="#caret"/></svg>
                <button class="flex w-[26px] justify-center" aria-label="隐藏/显示项目"><svg class="size-5" viewBox="0 0 20 20"><path d="M1 10q9-11 18 0q-9 11-18 0z" fill="#e4e4e4" stroke="#aaa"/><circle cx="10" cy="10" r="4" fill="#888"/><path d="M10 3v14" stroke="#333"/></svg></button>
                <svg class="mx-1 h-1 w-[6px]"><use href="#caret"/></svg>
                <button class="flex w-[26px] justify-center" aria-label="编辑外观"><svg class="size-5" viewBox="0 0 20 20"><svg width="17" height="17"><use href="#ball"/></svg><path d="M8 19l1-4 8-8 3 3-8 8z" fill="#f2cf51" stroke="#666"/></svg></button>
                <button class="flex w-[25px] justify-center" aria-label="应用布景"><svg class="size-5" viewBox="0 0 20 20"><path d="M1 9h18v10H1z" fill="#555"/><path d="M2 11h4v3H2zM14 11h4v3h-4zM6 15h4v3H6zM11 15h4v3h-4z" fill="#fff"/><svg x="2" width="16" height="16"><use href="#ball"/></svg></svg></button>
                <svg class="mx-1 h-1 w-[6px]"><use href="#caret"/></svg>
                <button class="flex w-[28px] justify-center" aria-label="视图设定"><svg class="size-5" viewBox="0 0 20 20"><path d="M1 3h18v11H1z" fill="#e4e4e6" stroke="#666" stroke-width="1.500"/><path d="M10 14v3M6 18h8" stroke="#666" stroke-width="2"/></svg></button>
                <svg class="mx-1 h-1 w-[6px]"><use href="#caret"/></svg>
            </div>
            <div class="ml-auto flex items-center pt-[2px] pr-[6px]">
                <button class="flex w-[26px] justify-center" aria-label="左侧窗格"><svg class="size-[14px]" viewBox="0 0 14 14" fill="none" stroke="#999"><path d="M1 1h11.500v12H1z"/><path d="M6 4v6L2 7z" fill="#888"/></svg></button>
                <button class="flex w-[26px] justify-center" aria-label="右侧窗格"><svg class="size-[14px]" viewBox="0 0 14 14" fill="none" stroke="#999"><path d="M1 1h11.500v12H1z"/><path d="M8 4v6l4-3z" fill="#888"/></svg></button>
                <button class="flex w-[26px] justify-center" aria-label="最小化文档"><svg class="size-[14px]" viewBox="0 0 14 14"><path d="M2 10h10v3H2z" fill="#999"/></svg></button>
                <button class="flex w-[26px] justify-center" aria-label="还原文档"><svg class="size-[14px]" viewBox="0 0 14 14" fill="none" stroke="#999" stroke-width="1.500"><path d="M1 6h8v6H1zM5 6V2h8v6H9"/></svg></button>
                <button class="flex w-[26px] justify-center" aria-label="关闭文档"><svg class="size-[14px]" viewBox="0 0 14 14" stroke="#999" stroke-width="1.500"><path d="M2 2l10 10M12 2L2 12"/></svg></button>
            </div>
        </div>

        <div class="relative flex min-h-0 flex-1 justify-between">
            <!-- feature manager -->
            <aside class="relative flex w-[261px] shrink-0 flex-col border-r border-[#8a8a8a] bg-[#494949]">
                <div class="mt-[2px] mr-[3px] flex h-4 items-center justify-center border-y border-[#c4c4c4]"><span class="size-[5px] rounded-full bg-[#ddd]"></span></div>
                <div class="mt-1 mr-[3px] flex h-[26px] items-center border-b border-[#aaa]">
                    <button class="flex h-full w-10 items-center justify-center border-t border-r border-[#8a8a8a]" aria-label="设计树"><svg class="size-5"><use href="#asm"/></svg></button>
                    <button class="flex h-full w-10 items-center justify-center border-t border-r border-[#8a8a8a] bg-[#333]" aria-label="属性"><svg class="size-5"><use href="#list"/></svg></button>
                    <button class="flex h-full w-10 items-center justify-center border-t border-r border-[#8a8a8a] bg-[#333]" aria-label="配置"><svg class="size-5" viewBox="0 0 20 20"><path d="M4 1v16M4 3h7M4 14h9M11 6v3H7v3" fill="none" stroke="#ddd"/><path d="M10 2h5v4h-5zM12 12h5v5h-5z" fill="#eee"/></svg></button>
                    <button class="flex h-full w-10 items-center justify-center border-t border-r border-[#8a8a8a] bg-[#333]" aria-label="尺寸专家"><svg class="size-5" viewBox="0 0 20 20" fill="none" stroke="#c4c4c4"><circle cx="10" cy="10" r="7" stroke-width="1.500"/><path d="M10 0v20M0 10h20" stroke="#aaa" stroke-width="3"/><path d="M10 1v18M1 10h18" stroke="#222"/></svg></button>
                    <button class="flex h-full w-10 items-center justify-center border-t border-r border-[#8a8a8a] bg-[#333]" aria-label="外观"><svg class="size-5"><use href="#ball"/></svg></button>
                    <button class="ml-auto pr-[3px]" aria-label="展开"><svg class="h-3 w-[10px]" viewBox="0 0 10 12" fill="none" stroke="#ddd" stroke-width="1.500"><path d="M1 1l4 5-4 5M5 1l4 5-4 5"/></svg></button>
                </div>
                <label class="mr-[3px] ml-[3px] flex h-8 items-center border border-[#c4c4c4]">
                    <svg class="ml-[2px] size-[18px]" viewBox="0 0 18 18"><path d="M1 3h16l-6 7v7l-3-2v-5z" fill="#f1f1f1"/><path d="M0 0h17v3H0z" fill="#58aed4"/></svg>
                    <svg class="mt-1 ml-[2px] h-1 w-[5px] text-[#666]"><use href="#caret"/></svg>
                    <input type="text" aria-label="筛选" class="ml-1 min-w-0 flex-1 bg-transparent">
                </label>
                <ul class="mr-[3px] overflow-hidden border-b-2 border-[#2a80c8] font-['Inter','Noto_Sans_CJK_SC',sans-serif] text-[15px] leading-6 whitespace-nowrap">
                    <li class="flex h-6 items-center"><svg class="mr-[3px] ml-[2px] size-5 shrink-0"><use href="#asm"/></svg>装配体1&nbsp; (默认&lt;默认_显示状态-1&gt;)</li>
                    <li class="flex h-6 items-center"><span class="w-[26px] pl-[6px] text-[8px]">▶</span><svg class="mr-1 size-[18px] shrink-0" viewBox="0 0 18 18"><use href="#folder"/><circle cx="10" cy="11" r="4" fill="none" stroke="#333"/><path d="M10 9v2h2" stroke="#333" fill="none"/><path d="M3 11q1-4 5-4" stroke="#2b7ba5" stroke-width="2" fill="none"/></svg>History</li>
                    <li class="flex h-6 items-center"><span class="w-[26px]"></span><svg class="mr-1 size-[18px] shrink-0" viewBox="0 0 18 18"><use href="#folder"/><circle cx="9" cy="11" r="4" fill="#fff" stroke="#222" stroke-width="1.500"/><path d="M9 11l3-3M10 14l3-2" stroke="#d03020" stroke-width="2"/></svg>传感器</li>
                    <li class="flex h-6 items-center"><span class="w-[26px] pl-[6px] text-[8px]">▶</span><svg class="mr-1 size-[18px] shrink-0" viewBox="0 0 18 18"><use href="#folder"/><path d="M5.500 15L9 7l3.500 8M7 12.500h4M4 15h3M11 15h3" stroke="#1f6f99" stroke-width="1.500" fill="none"/></svg>注解</li>
                    <li class="flex h-6 items-center"><span class="w-[26px]"></span><svg class="mr-1 h-5 w-[18px] shrink-0"><use href="#plane"/></svg>前视基准面</li>
                    <li class="flex h-6 items-center"><span class="w-[26px]"></span><svg class="mr-1 h-5 w-[18px] shrink-0"><use href="#plane"/></svg>上视基准面</li>
                    <li class="flex h-6 items-center"><span class="w-[26px]"></span><svg class="mr-1 h-5 w-[18px] shrink-0"><use href="#plane"/></svg>右视基准面</li>
                    <li class="flex h-6 items-center"><span class="w-[26px]"></span><svg class="mr-1 size-[18px] shrink-0" viewBox="0 0 18 18"><path d="M3 1v14h14" fill="none" stroke="#aaa" stroke-width="4"/><path d="M3 2v13h14" fill="none" stroke="#222" stroke-width="1.500"/><path d="M1 4l2-3 2 3zM15 13l3 2-3 2z" fill="#222"/></svg>原点</li>
                    <li class="flex h-6 items-center"><span class="w-[26px] pl-[6px] text-[8px]">▶</span><svg class="mr-[3px] size-[19px] shrink-0"><use href="#part"/></svg>(固定) 2型&lt;1&gt; (后位&lt;显示状态</li>
                    <li class="flex h-6 items-center"><span class="w-[26px] pl-[6px] text-[8px]">▶</span><svg class="mr-[3px] size-[19px] shrink-0"><use href="#part"/></svg>2型&lt;2&gt; (驾驶位&lt;显示状态-3&gt;)</li>
                    <li class="flex h-6 items-center"><span class="w-[26px] pl-[6px] text-[8px]">▶</span><svg class="mr-[3px] size-[19px] shrink-0"><use href="#part"/></svg>2型&lt;3&gt; (右翼&lt;显示状态-5&gt;)</li>
                    <li class="flex h-6 items-center"><span class="w-[26px] pl-[6px] text-[8px]">▶</span><svg class="mr-[3px] size-[19px] shrink-0"><use href="#part"/></svg>2型&lt;4&gt; (左翼&lt;显示状态-6&gt;)</li>
                    <li class="flex h-6 items-center"><span class="w-[26px] pl-[6px] text-[8px]">▶</span><svg class="mr-1 size-[18px] shrink-0" viewBox="0 0 18 18" fill="none"><path d="M2 14V4q2-4 5 0v10q-2 3-3 0V6M11 4v10q2 4 5 0V4q-2-3-3 0v8" stroke="#aaa" stroke-width="3"/><path d="M2 14V4q2-4 5 0v10q-2 3-3 0V6M11 4v10q2 4 5 0V4q-2-3-3 0v8" stroke="#2c7ca8" stroke-width="1.500"/></svg>配合</li>
                </ul>
                <div class="mt-auto mr-[3px] flex h-[22px] items-center bg-[#32353c] px-2"><div class="h-3 w-full rounded bg-[#2c2e33] px-4"><div class="h-3 w-[189px] rounded bg-[#1f2124]"></div></div></div>
                <div class="absolute top-[381px] -right-3 flex h-12 w-3 items-center justify-center border border-l-0 border-[#777] bg-[#494949]"><span class="mr-px size-[5px] rounded-full bg-[#ddd]"></span></div>
            </aside>

            <!-- task pane -->
            <aside class="flex">
                <div class="relative mt-[22px] flex h-[211px] w-8 flex-col divide-y divide-[#8a8a8a] border border-[#8a8a8a] bg-[#333] *:flex *:flex-1 *:items-center *:justify-center">
                    <button aria-label="资源"><svg class="size-[18px]" viewBox="0 0 18 18"><path d="M3 9l6-6 6 6v8H3z" fill="#eee"/><path d="M0 9l9-8 9 8-2 2-7-7-7 7z" fill="#4ba0c8"/><path d="M7 11h4v6H7z" fill="#555"/></svg></button>
                    <button aria-label="设计库"><svg class="size-[18px]" viewBox="0 0 18 18" stroke="#555" fill="#e8e8e8"><path d="M2 4l4-3v14l-3 1zM6 4l5-3v15l-4 1zM11 4l5-3v14l-4 2z"/></svg></button>
                    <button aria-label="文件探索器"><svg class="size-[18px]" viewBox="0 0 18 18"><path d="M0 16V2h6l1 3h8v11z" fill="#bbb"/><path d="M1 16l4-9h13l-4 9z" fill="#f0f0f0"/></svg></button>
                    <button aria-label="视图调色板"><svg class="size-[18px]" viewBox="0 0 18 18"><path d="M1 1h16v16H1z" fill="#eee"/><path d="M3 3h8v3H3zM13 3h3v3h-3zM7 8h3v4h3v3H3v-3h4z" fill="#f3c32c" stroke="#6b500e" stroke-width=".8"/></svg></button>
                    <button aria-label="外观、布景和贴图" class="bg-[#ababab]"><svg class="size-[18px]"><use href="#ball"/></svg></button>
                    <button aria-label="自定义属性"><svg class="size-[18px]"><use href="#list"/></svg></button>
                    <button aria-label="论坛"><svg class="size-[18px]" viewBox="0 0 18 18"><path d="M0 3h11v8H6l-3 4v-4H0z" fill="#64b1d6"/><path d="M8 8h9v6h-1v3l-3-3H8z" fill="#ddd" stroke="#444" stroke-width=".7"/></svg></button>
                    <div class="absolute top-[188px] -right-px h-[53px] w-[10px] rounded-l bg-[#1c1e22]"><i class="h-[46px] w-[2px] bg-linear-to-b from-[#5c4118] from-50% to-[#2f7d23] to-60%"></i></div>
                </div>
            </aside>
        </div>
    </main>

    <!-- model tabs -->
    <div class="flex h-[21px] shrink-0 border-y border-[#8a8a8a] text-[16px] leading-[18px] whitespace-nowrap">
        <div class="ml-[2px] flex w-[81px] divide-x divide-[#777792] bg-[#a9a8c0] text-[#77778f] *:flex *:flex-1 *:items-center *:justify-center">
            <button aria-label="第一个"><svg class="size-3" viewBox="0 0 12 12"><path d="M2 1v10M11 1v10L4 6z" fill="currentColor" stroke="currentColor"/></svg></button>
            <button aria-label="上一个"><svg class="size-3" viewBox="0 0 12 12"><path d="M9 1v10L3 6z" fill="currentColor"/></svg></button>
            <button aria-label="下一个"><svg class="size-3" viewBox="0 0 12 12"><path d="M3 1v10l6-5z" fill="currentColor"/></svg></button>
            <button aria-label="最后一个"><svg class="size-3" viewBox="0 0 12 12"><path d="M1 1v10l7-5zM10 1v10" fill="currentColor" stroke="currentColor"/></svg></button>
        </div>
        <a href="#" class="w-[60px] pl-4">模型</a>
        <a href="#" class="w-[77px] border-l border-[#8a8a8a] bg-[#333] pl-2">3D 视图</a>
        <a href="#" class="w-[109px] border-x border-[#8a8a8a] bg-[#333] pl-2">运动算例 1</a>
    </div>

    <!-- status bar -->
    <footer class="flex h-[21px] shrink-0 items-center text-[15px] leading-5 whitespace-nowrap">
        <span class="pl-px">SOLIDWORKS Premium 2016 x64 版</span>
        <span class="ml-auto border-r border-[#333] pr-2">完全定义</span>
        <span class="ml-[6px] border-l border-[#333] px-1">在编辑 装配体</span>
        <span class="ml-1 w-4 border-x border-[#333]">&nbsp;</span>
        <span class="ml-[35px]">自定义</span>
        <svg class="ml-6 h-[5px] w-[7px]" viewBox="0 0 7 5"><path d="M0 5l3.500-4L7 5z" fill="#eee"/></svg>
        <svg class="mr-1 ml-[67px] size-4" viewBox="0 0 16 16"><path d="M1 7l7-6 7 7-6 7z" fill="#eee"/><path d="M4 6l7 6M7 4l5 5" stroke="#333" stroke-width="1.500"/></svg>
    </footer>

    <!-- windows taskbar -->
    <div class="relative flex h-[50px] shrink-0 items-stretch bg-[#32343c] text-[15px] whitespace-nowrap">
        <button class="flex w-[60px] items-center justify-center bg-[#2e2e38]" aria-label="开始"><svg class="size-8" viewBox="0 0 32 32" fill="#fff"><path d="M0 5l13-2v12H0zM14 3l18-3v15H14zM0 16h13v13L0 27zM14 16h18v16l-18-3z"/></svg></button>
        <label class="flex w-[430px] items-center bg-[#2d2e33]">
            <svg class="ml-[11px] size-7" viewBox="0 0 28 28"><circle cx="14" cy="14" r="11.500" fill="none" stroke="#f4f4f4" stroke-width="4"/></svg>
            <input type="text" aria-label="搜索" placeholder="在这里输入你要搜索的内容" class="ml-[11px] min-w-0 flex-1 bg-transparent text-[19px] placeholder:text-[#a0a0a0]">
            <svg class="mr-[18px] h-[22px] w-4" viewBox="0 0 16 22" fill="none" stroke="#bbb" stroke-width="1.500"><rect x="4" y="1" width="8" height="13" rx="2"/><path d="M1 10v4q0 3 4 3h6q4 0 4-3v-4M8 17v4M4 21h8"/></svg>
        </label>
        <button class="flex w-[60px] items-center justify-center" aria-label="任务视图"><svg class="h-5 w-[21px]" viewBox="0 0 21 20" fill="none" stroke="#eee" stroke-width="1.500"><path d="M1 0v3h12V0M1 20v-3h12v3M1 6h12v8H1zM18.500 0v5M18.500 12v8"/><path d="M17 7h3v3h-3z" fill="#eee"/></svg></button>
        <button class="flex w-20 items-center justify-center" aria-label="应用商店"><svg class="h-10 w-10" viewBox="0 0 40 40"><path d="M13 12V7q0-6 7-6t7 6v5" fill="none" stroke="#fff" stroke-width="2"/><path d="M0 11h40v26q0 3-3 3H3q-3 0-3-3z" fill="#fff"/><path d="M12 17h7v8h-7z" fill="#f25022"/><path d="M21 17h7v8h-7z" fill="#7fba00"/><path d="M12 26h7v8h-7z" fill="#00a4ef"/><path d="M21 26h7v8h-7z" fill="#ffb900"/></svg></button>
        <button class="flex w-[200px] items-center bg-[#212427] pl-3"><svg class="mr-[6px] size-9" viewBox="0 0 36 36"><circle cx="18" cy="18" r="18" fill="#fccd48"/><path d="M2.400 9A18 18 0 0 0 18 36l7.800-13.500L18 18z" fill="#1da25f"/><path d="M18 9h15.600A18 18 0 0 0 2.400 9l7.800 13.500z" fill="#de5147"/><circle cx="18" cy="18" r="8.500" fill="#f4f4f4"/><circle cx="18" cy="18" r="6.500" fill="#4a86e8"/></svg>编辑器 - 科创论坛 ...</button>
        <button class="flex w-[201px] items-center bg-[#373940] pl-[10px]"><svg class="mr-[5px] h-10 w-10" viewBox="0 0 40 40"><path d="M1 7L19 0l20 5v25L17 36 1 30z" fill="#c4121b" stroke="#2a0508"/><path d="M1 7L19 0l20 5-21 6z" fill="#e8333a"/><path d="M18 11v25" stroke="#7a0a10"/><text x="3" y="28" fill="#fff" font-family="'Liberation Sans',sans-serif" font-size="21" font-weight="700">S</text><text x="19" y="28" fill="#fff" font-family="'Liberation Sans',sans-serif" font-size="20" font-weight="700">W</text><text x="17" y="38" fill="#fff" stroke="#222" stroke-width="2" paint-order="stroke" font-family="'Liberation Sans',sans-serif" font-size="10" font-weight="700">2016</text></svg>SOLIDWORKS Pr...</button>

        <div class="ml-auto flex items-center">
            <svg class="mx-[9px] size-3" viewBox="0 0 12 12"><circle cx="6" cy="6" r="4.500" fill="none" stroke="#fff" stroke-width="2.500"/><circle cx="6" cy="6" r="1.500" fill="#fff"/></svg>
            <svg class="ml-[5px] h-4 w-5" viewBox="0 0 20 16" fill="none" stroke="#fff"><path d="M5 4h13v9H5zM18 7h2v3"/><path d="M8 6h8v5H8z" fill="#fff"/><path d="M1 1v3h4V1M3 4v8h2" /></svg>
            <svg class="ml-[13px] size-4" viewBox="0 0 16 16" fill="none" stroke="#ddd"><path d="M1 14Q1 2 14 1M5 15Q5 6 15 5M9 15Q9 10 15 9"/><circle cx="14" cy="14" r="1.500" fill="#fff"/></svg>
            <svg class="ml-[10px] h-4 w-5" viewBox="0 0 20 16" fill="none" stroke="#fff"><path d="M1 5h3l4-4v14l-4-4H1zM11 5q2 3 0 6M14 3q3 5 0 10M16 1q5 7 0 14"/></svg>
            <span class="ml-[10px] w-[18px] text-[16px]">中</span>
            <div class="w-[102px] text-center leading-[23px]">23:57<br>2019/8/21</div>
            <button class="mr-8 ml-[11px]" aria-label="通知"><svg class="h-5 w-5" viewBox="0 0 20 20" fill="none" stroke="#fff" stroke-width="1.500"><path d="M1 1h18v15h-6l-3 3-3-3H1z"/></svg></button>
        </div>

        <!-- forum watermark -->
        <div class="pointer-events-none absolute right-[20px] bottom-0 flex h-[98px] items-start gap-1 opacity-60">
            <svg class="h-[80px] w-[46px]" viewBox="0 0 46 80"><path d="M17 12L30 1v19h10q5 0 5 6v30q0 6-5 6H30L17 78V62H7q-6 0-6-6V26q0-6 6-6h10z" fill="#b0403a" stroke="#aaa"/><path d="M10 32h7v18h-7zM29 32h8v18h-8z" fill="#494949" stroke="#999"/></svg>
            <div class="pt-[14px] text-[#a4a4a4]">
                <div class="text-[28px] leading-8 font-bold italic">科创论坛</div>
                <div class="text-[18px] leading-6 italic">kechuang.org</div>
            </div>
        </div>
    </div>
</body>
</html>
